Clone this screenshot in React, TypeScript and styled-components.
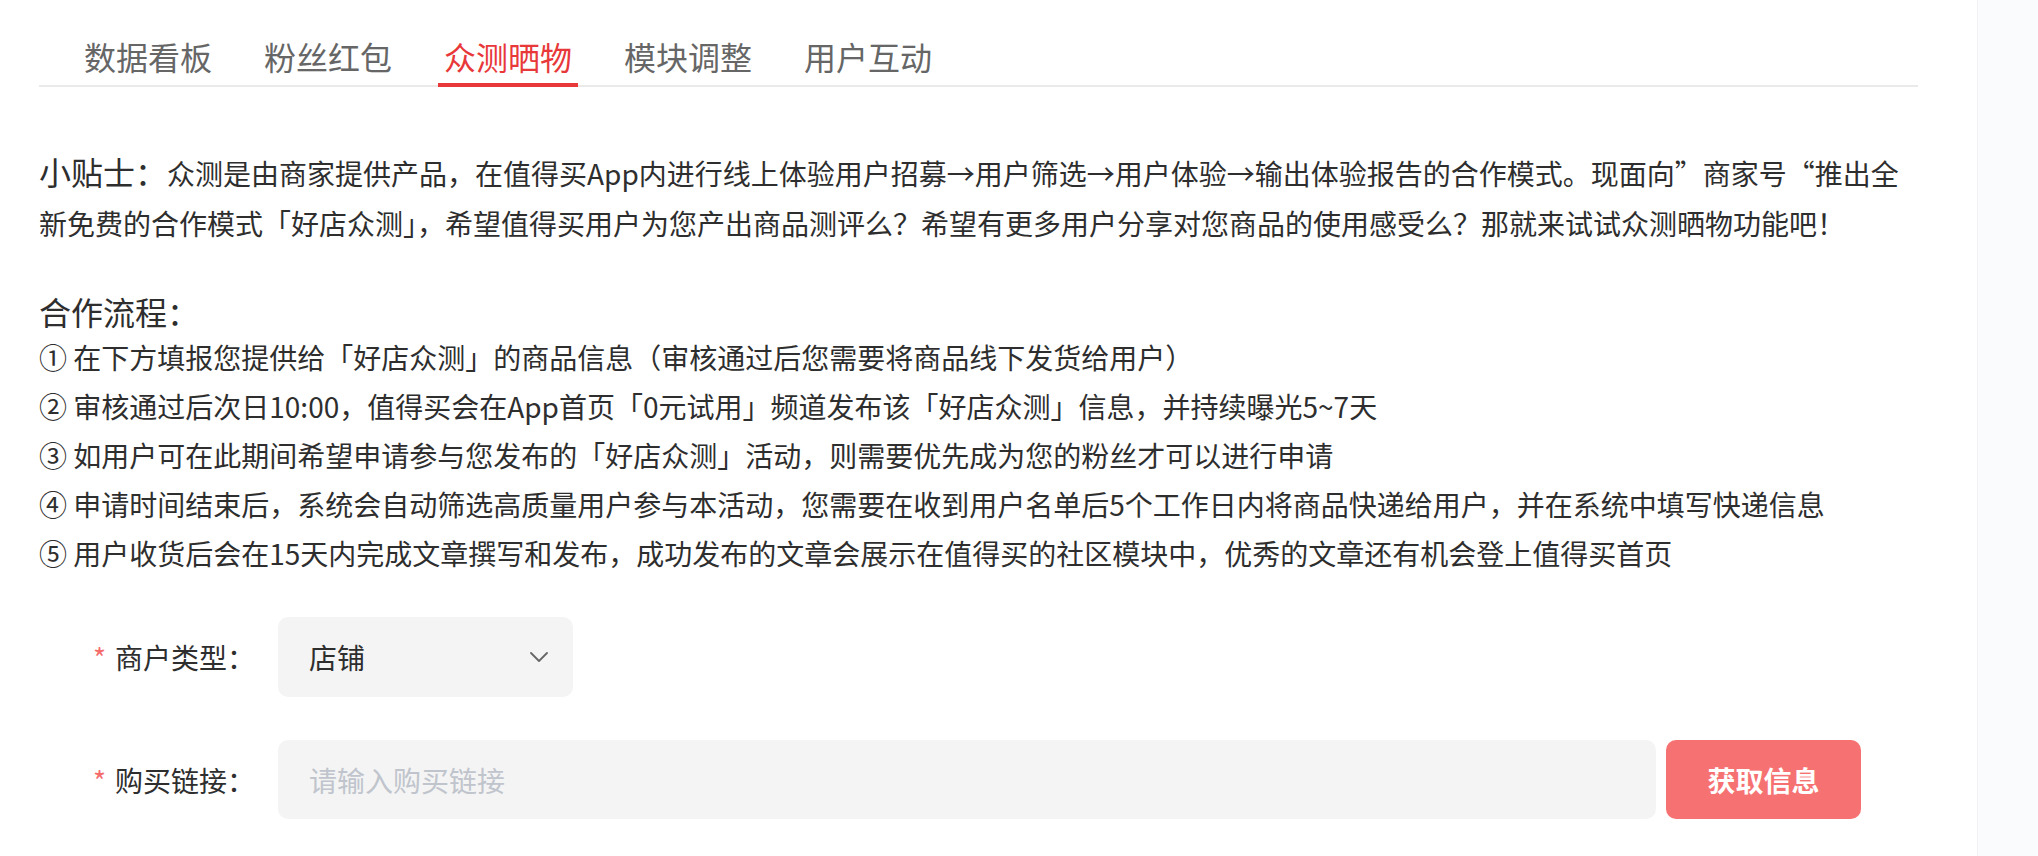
import React from "react";
import styled, { createGlobalStyle } from "styled-components";

const GlobalStyle = createGlobalStyle`
  html, body {
    margin: 0;
    padding: 0;
    background: #fff;
  }
  body {
    font-family: "Noto Sans CJK SC", "Noto Sans", sans-serif;
    color: #333;
  }
`;

const tabs = ["数据看板", "粉丝红包", "众测晒物", "模块调整", "用户互动"];

const steps = [
  "① 在下方填报您提供给「好店众测」的商品信息（审核通过后您需要将商品线下发货给用户）",
  "② 审核通过后次日10:00，值得买会在App首页「0元试用」频道发布该「好店众测」信息，并持续曝光5~7天",
  "③ 如用户可在此期间希望申请参与您发布的「好店众测」活动，则需要优先成为您的粉丝才可以进行申请",
  "④ 申请时间结束后，系统会自动筛选高质量用户参与本活动，您需要在收到用户名单后5个工作日内将商品快递给用户，并在系统中填写快递信息",
  "⑤ 用户收货后会在15天内完成文章撰写和发布，成功发布的文章会展示在值得买的社区模块中，优秀的文章还有机会登上值得买首页",
];

export default function App() {
  return (
    <Page>
      <GlobalStyle />
      <Main>
        <TabBar>
          {tabs.map((t) => (
            <Tab key={t} active={t === "众测晒物"}>
              {t}
            </Tab>
          ))}
        </TabBar>

        <Tips>
          <TipsTitle>小贴士：</TipsTitle>
          <span>
            众测是由商家提供产品，在值得买App内进行线上体验用户招募→用户筛选→用户体验→输出体验报告的合作模式。现面向”商家号“推出全新免费的合作模式「好店众测」，希望值得买用户为您产出商品测评么？希望有更多用户分享对您商品的使用感受么？那就来试试众测晒物功能吧！
          </span>
        </Tips>

        <Heading>合作流程：</Heading>
        <Steps>
          {steps.map((s) => (
            <li key={s}>{s}</li>
          ))}
        </Steps>

        <Form>
          <Row>
            <Label>
              <Star>*</Star>商户类型：
            </Label>
            <Select>
              <span>店铺</span>
              <svg width="18" height="10" viewBox="0 0 18 10" fill="none">
                <path
                  d="M1 1l8 8 8-8"
                  stroke="#666"
                  strokeWidth="1.8"
                  strokeLinecap="round"
                  strokeLinejoin="round"
                />
              </svg>
            </Select>
          </Row>
          <Row gap={43}>
            <Label>
              <Star>*</Star>购买链接：
            </Label>
            <Input placeholder="请输入购买链接" />
            <FetchButton>获取信息</FetchButton>
          </Row>
        </Form>
      </Main>
      <RightRail />
    </Page>
  );
}

const Page = styled.div`
  display: flex;
  min-height: 100vh;
`;

const Main = styled.div`
  flex: 1;
  padding: 0 59px 0 39px;
`;

const TabBar = styled.nav`
  display: flex;
  gap: 40px;
  padding: 36px 0 0 39px;
  border-bottom: 2px solid #eaeaea;
`;

const Tab = styled.div<{ active?: boolean }>`
  font-size: 32px;
  line-height: 40px;
  padding: 0 6px 7px;
  color: ${(p) => (p.active ? "#e8383a" : "#666")};
  border-bottom: 4px solid ${(p) => (p.active ? "#e8383a" : "transparent")};
  margin-bottom: -2px;
  cursor: pointer;
`;

const Tips = styled.p`
  margin: 61px 0 0;
  font-size: 28px;
  line-height: 50px;
  color: #2e2e2e;
`;

const TipsTitle = styled.span`
  font-size: 32px;
  line-height: 1;
`;

const Heading = styled.h3`
  margin: 41px 0 0;
  font-size: 32px;
  line-height: 44px;
  font-weight: 400;
  color: #2e2e2e;
`;

const Steps = styled.ul`
  margin: 0;
  padding: 0;
  list-style: none;
  font-size: 28px;
  line-height: 49px;
  color: #2e2e2e;
`;

const Form = styled.div`
  margin-top: 39px;
  padding-left: 54px;
`;

const Row = styled.div<{ gap?: number }>`
  display: flex;
  align-items: center;
  margin-top: ${(p) => p.gap ?? 0}px;
`;

const Label = styled.label`
  width: 185px;
  flex-shrink: 0;
  font-size: 28px;
  color: #2e2e2e;
  display: flex;
  align-items: center;
`;

const Star = styled.span`
  color: #f56c6c;
  margin-right: 10px;
  width: 12px;
`;

const Select = styled.div`
  width: 295px;
  height: 80px;
  box-sizing: border-box;
  padding: 0 25px 0 31px;
  border-radius: 10px;
  background: #f4f4f4;
  display: flex;
  align-items: center;
  justify-content: space-between;
  font-size: 28px;
  color: #2e2e2e;
`;

const Input = styled.input`
  width: 1378px;
  height: 79px;
  box-sizing: border-box;
  padding: 0 31px;
  border: none;
  outline: none;
  border-radius: 10px;
  background: #f4f4f4;
  font-family: inherit;
  font-size: 28px;
  color: #333;
  &::placeholder {
    color: #c0c4cc;
  }
`;

const FetchButton = styled.button`
  margin-left: 10px;
  width: 195px;
  height: 79px;
  border: none;
  border-radius: 10px;
  background: #f67272;
  color: #fff;
  font-family: inherit;
  font-size: 28px;
  font-weight: 700;
  cursor: pointer;
`;

const RightRail = styled.aside`
  width: 60px;
  flex-shrink: 0;
  background: #fafbfd;
  border-left: 1px solid #f1f2f6;
`;
